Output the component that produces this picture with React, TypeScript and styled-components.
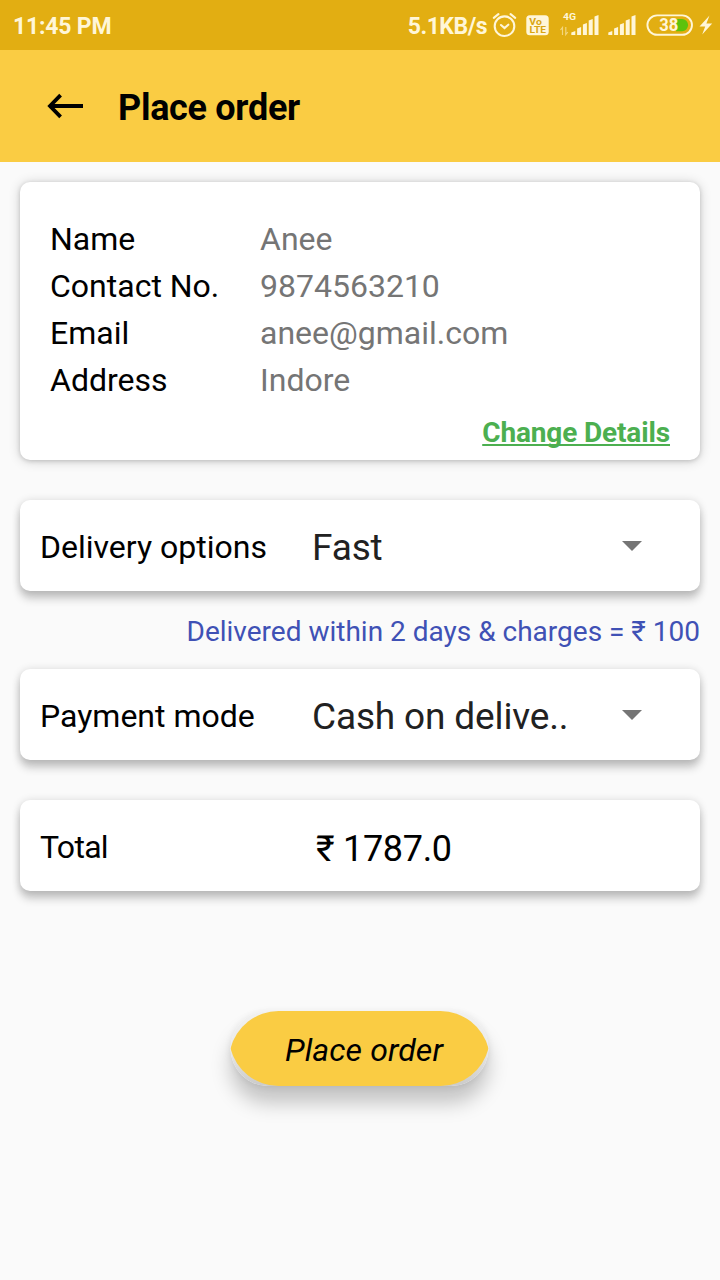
import React from "react";
import styled, { createGlobalStyle } from "styled-components";

const GlobalStyle = createGlobalStyle`
  * { box-sizing: border-box; }
  body {
    margin: 0;
    background: #fafafa;
    font-family: Roboto, "Liberation Sans", sans-serif;
    color: #000;
  }
`;

const Screen = styled.div`
  width: 720px;
  height: 1280px;
  display: flex;
  flex-direction: column;
  background: #fafafa;
  overflow: hidden;
`;

const StatusBar = styled.header`
  height: 50px;
  flex: none;
  display: flex;
  align-items: center;
  justify-content: space-between;
  padding: 0 6px 0 13px;
  background: #e2ae12;
  color: #fff6d8;
  font-size: 23px;
  font-weight: 700;
  line-height: 48px;
`;

const Clock = styled.span`
  padding-top: 4px;
  letter-spacing: -0.2px;
`;

const StatusItems = styled.div`
  display: flex;
  align-items: center;
  height: 50px;
`;

const Speed = styled.span`
  padding-top: 4px;
  letter-spacing: -0.5px;
  margin-right: 5px;
`;

const StatusIcons = styled.svg`
  display: block;
  font-family: Roboto, sans-serif;
  font-weight: 700;
`;

const AppBar = styled.div`
  height: 112px;
  flex: none;
  display: flex;
  align-items: center;
  padding: 0 46px;
  gap: 34px;
  background: #facc43;
`;

const BackButton = styled.button`
  display: flex;
  width: 38px;
  height: 28px;
  padding: 0;
  border: 0;
  background: none;
`;

const Title = styled.h1`
  margin: 3px 0 0;
  font-size: 36px;
  font-weight: 700;
  line-height: 42px;
  letter-spacing: -0.3px;
`;

const Content = styled.main`
  display: flex;
  flex-direction: column;
  padding: 20px 20px 0;
`;

const Card = styled.section`
  background: #fff;
  border-radius: 10px;
  box-shadow: 0 1px 12px rgba(0, 0, 0, 0.19), 0 1px 4px rgba(0, 0, 0, 0.15);
`;

const DetailsCard = styled(Card)`
  height: 278px;
  padding: 34px 30px 0;
  display: flex;
  flex-direction: column;
`;

const DetailRow = styled.div`
  display: grid;
  grid-template-columns: 210px 1fr;
  font-size: 32px;
  line-height: 47px;
`;

const DetailValue = styled.span`
  color: #757575;
`;

const ChangeLink = styled.a`
  align-self: flex-end;
  margin-top: 12px;
  color: #4caf50;
  font-size: 28px;
  font-weight: 700;
  line-height: 33px;
  letter-spacing: -0.14px;
  text-decoration: underline;
  text-decoration-thickness: 2px;
  text-underline-offset: 2px;
  text-decoration-skip-ink: none;
`;

const OptionCard = styled(Card)<{ $gap: number }>`
  height: 91px;
  margin-top: ${(p) => p.$gap}px;
  padding: 0 58px 0 20px;
  display: grid;
  grid-template-columns: 272px 1fr 20px;
  align-items: center;
  box-shadow: 0 8px 8px rgba(0, 0, 0, 0.19), 0 1px 8px rgba(0, 0, 0, 0.16);
`;

const OptionLabel = styled.span<{ $tight?: boolean }>`
  font-size: 32px;
  line-height: 38px;
  padding-top: 3px;
  letter-spacing: ${(p) => (p.$tight ? "-0.7px" : "0")};
`;

const OptionValue = styled.span`
  font-size: 37px;
  line-height: 44px;
  padding-top: 4px;
  letter-spacing: -0.15px;
  color: #212121;
`;

const TotalValue = styled.span`
  padding: 7px 0 0 4px;
  font-size: 36px;
  line-height: 42px;
  letter-spacing: -0.3px;
`;

const Note = styled.p`
  margin: 24px 0 0;
  color: #3f51b5;
  font-size: 28px;
  line-height: 34px;
  text-align: right;
`;

const OrderButton = styled.button`
  position: relative;
  align-self: center;
  width: 258px;
  height: 75px;
  margin: 120px 0 0;
  transform: translateX(-0.5px);
  padding: 2px 0 0 9px;
  border: 0;
  border-radius: 38px;
  background: linear-gradient(#f1f1f1 0%, #eaeaea 50%, #cacaca 100%);
  box-shadow: 0 17px 20px rgba(0, 0, 0, 0.22), 0 1px 7px rgba(0, 0, 0, 0.08);
  color: #000;
  font-family: inherit;
  font-size: 32px;
  font-style: italic;
  letter-spacing: 0.1px;
`;

const ButtonShape = styled.svg`
  position: absolute;
  inset: 0;
`;

const ButtonText = styled.span`
  position: relative;
`;

const BARS = [4, 8, 12, 16, 20];

const Signal = ({ x }: { x: number }) => (
  <g fill="#fff6d8">
    {BARS.map((h, i) => {
      const left = x + i * 5.8;
      return <path key={h} d={`M${left} 35V${36.5 - h}L${left + 4} ${35 - h}V35z`} />;
    })}
  </g>
);

const Icons = () => (
  <StatusIcons width="222" height="50" viewBox="492 0 222 50">
    <g fill="none" stroke="#fff6d8" strokeWidth="2.1" strokeLinecap="round">
      <circle cx="504.5" cy="26.2" r="9.8" />
      <path d="M501 25l3.5 3 3.8-3.3M493.8 17.8l4.6-3.6M515.2 17.8l-4.6-3.6" />
    </g>
    <rect x="526.3" y="15.2" width="22.4" height="20" rx="3.5" fill="#fff6d8" />
    <g fontSize="8.8" fill="#d9a511">
      <text x="529.3" y="24.6" textLength="12.5" lengthAdjust="spacingAndGlyphs">Vo</text>
      <text x="529.5" y="33.2" textLength="16.5" lengthAdjust="spacingAndGlyphs">LTE</text>
    </g>
    <text x="563" y="20" fontSize="9.5" fill="#fff6d8" textLength="13" lengthAdjust="spacingAndGlyphs">4G</text>
    <path d="M562.5 35v-7.5l-2 2.5M565.8 27v7.5l2-2.5" fill="none" stroke="#f3d67e" strokeWidth="1.2" />
    <Signal x={571.3} />
    <Signal x={608.3} />
    <rect x="647.4" y="15.4" width="44.6" height="19.4" rx="9.7" fill="none" stroke="#fff6d8" strokeWidth="1.9" />
    <path d="M676 19h6a6 6 0 0 1 0 12.2H676z" fill="#5cc20c" />
    <text x="659.2" y="31.2" fontSize="17.8" fill="#fff6d8" textLength="19" lengthAdjust="spacingAndGlyphs">38</text>
    <path d="M709.5 15.5l-10 11h5.7l-3 8 10-11h-5.8z" fill="#fff6d8" />
  </StatusIcons>
);

const Caret = () => (
  <svg width="20" height="10" viewBox="0 0 20 10">
    <path d="M0 0h20L10 10z" fill="#757575" />
  </svg>
);

const DETAILS = [
  ["Name", "Anee"],
  ["Contact No.", "9874563210"],
  ["Email", "anee@gmail.com"],
  ["Address", "Indore"],
];

export default function App() {
  return (
    <Screen>
      <GlobalStyle />
      <StatusBar>
        <Clock>11:45 PM</Clock>
        <StatusItems>
          <Speed>5.1KB/s</Speed>
          <Icons />
        </StatusItems>
      </StatusBar>
      <AppBar>
        <BackButton aria-label="Back">
          <svg width="38" height="28" viewBox="0 0 38 28">
            <path d="M37 14H4.5M14.6 3.2L4 14l10.6 10.8" fill="none" stroke="#000" strokeWidth="3.8" />
          </svg>
        </BackButton>
        <Title>Place order</Title>
      </AppBar>
      <Content>
        <DetailsCard>
          {DETAILS.map(([label, value]) => (
            <DetailRow key={label}>
              <span>{label}</span>
              <DetailValue>{value}</DetailValue>
            </DetailRow>
          ))}
          <ChangeLink>Change Details</ChangeLink>
        </DetailsCard>
        <OptionCard $gap={40}>
          <OptionLabel>Delivery options</OptionLabel>
          <OptionValue>Fast</OptionValue>
          <Caret />
        </OptionCard>
        <Note>Delivered within 2 days &amp; charges = ₹ 100</Note>
        <OptionCard $gap={20}>
          <OptionLabel>Payment mode</OptionLabel>
          <OptionValue>Cash on delive..</OptionValue>
          <Caret />
        </OptionCard>
        <OptionCard $gap={40}>
          <OptionLabel $tight>Total</OptionLabel>
          <TotalValue>₹ 1787.0</TotalValue>
        </OptionCard>
        <OrderButton>
          <ButtonShape width="258" height="75" viewBox="0 0 258 75">
            <path d="M48 0H210A50 50 0 0 1 258 37.5A50 50 0 0 1 210 75H48A50 50 0 0 1 0 37.5A50 50 0 0 1 48 0Z" fill="#facc43" />
          </ButtonShape>
          <ButtonText>Place order</ButtonText>
        </OrderButton>
      </Content>
    </Screen>
  );
}
